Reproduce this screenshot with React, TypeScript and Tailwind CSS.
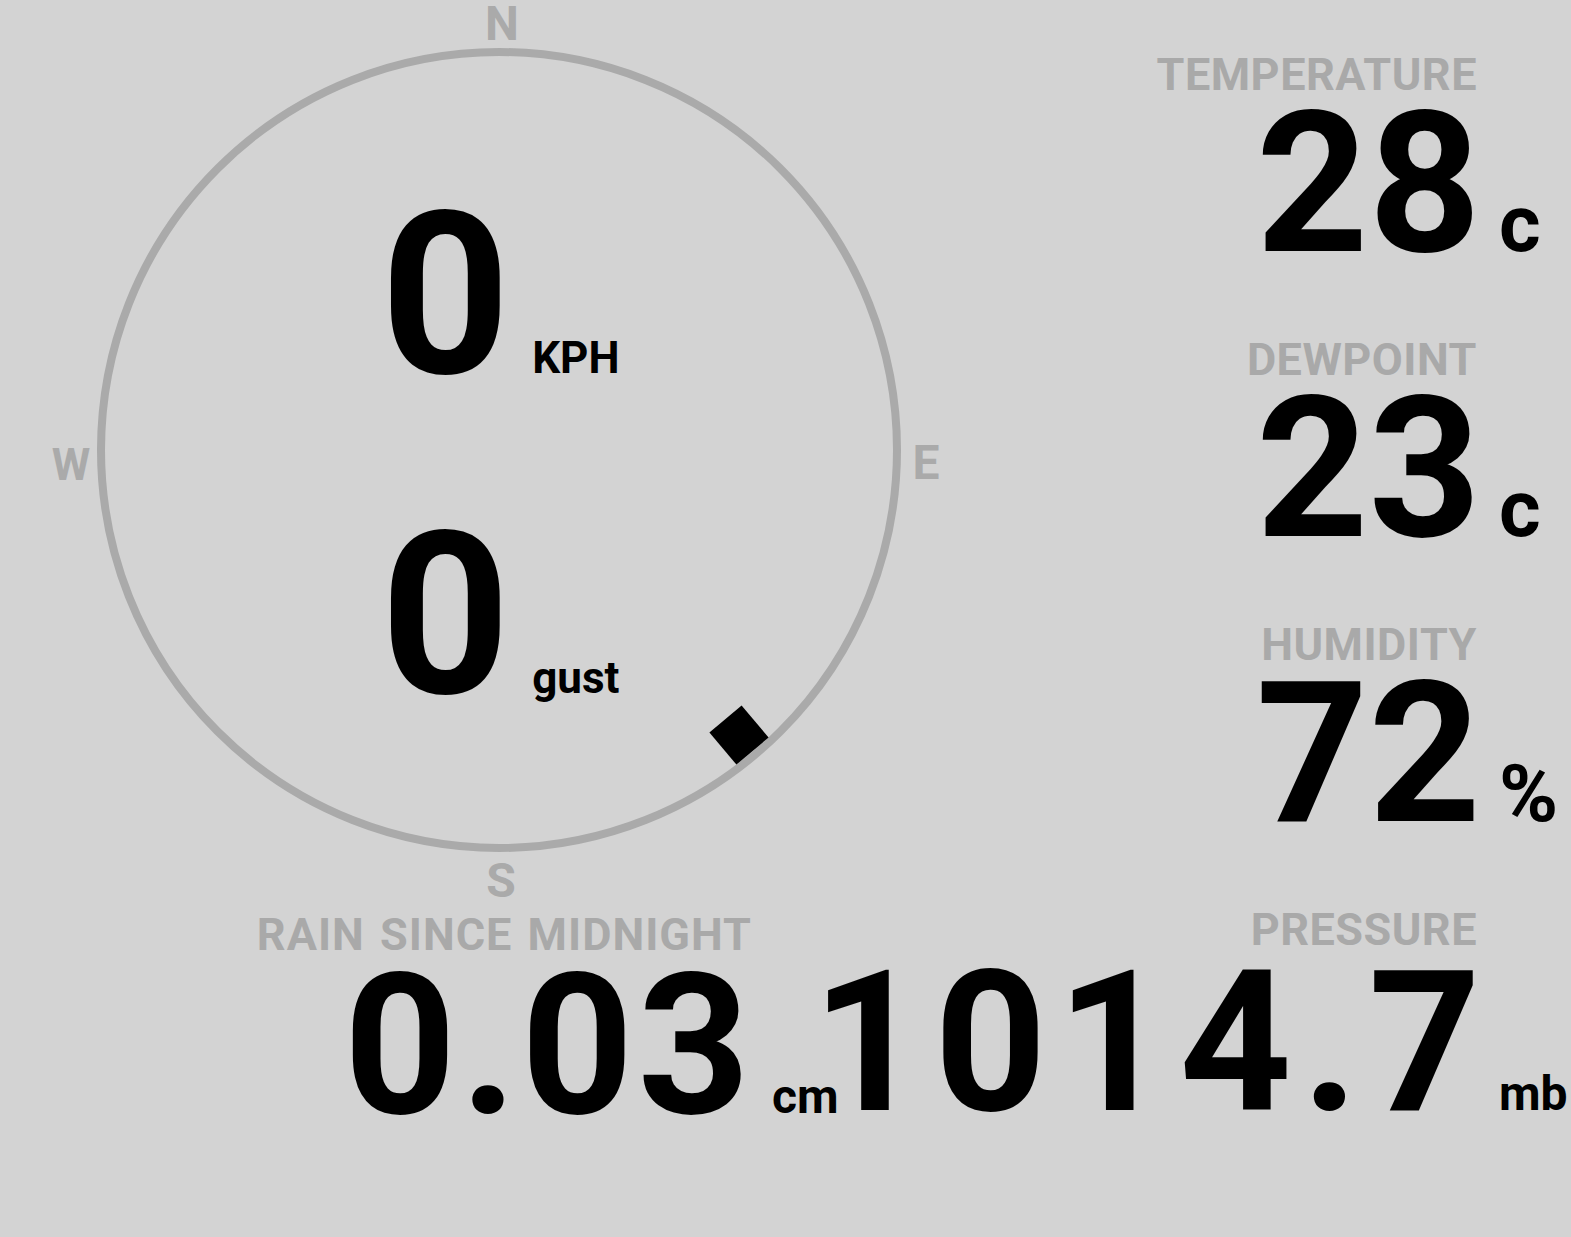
import React from 'react'

type StatProps = {
  label: string
  value: string
  unit: string
  unitClass: string
  labelClass?: string
  valueClass?: string
  numberClass?: string
}

function Stat({
  label,
  value,
  unit,
  unitClass,
  labelClass = 'mr-[94px] tracking-[0.5px]',
  valueClass = 'mt-[12px]',
  numberClass = '',
}: StatProps) {
  return (
    <div className="flex flex-col items-end">
      <div className={`text-[45px] leading-[45px] text-[#a9a9a9] ${labelClass}`}>{label}</div>
      <div className={`flex items-baseline ${valueClass}`}>
        <span className={`text-[196px] leading-[150px] text-black ${numberClass}`}>{value}</span>
        <span className={`leading-[0.75] text-black ${unitClass}`}>{unit}</span>
      </div>
    </div>
  )
}

function Compass() {
  return (
    <svg className="absolute inset-0 overflow-visible" width="1000" height="907" viewBox="0 0 1000 907">
      <circle cx="499" cy="450" r="398" fill="none" stroke="#aaaaaa" strokeWidth="8" />
      <g fill="#aaaaaa" fontFamily="Roboto, sans-serif" fontWeight="700" textAnchor="middle">
        <text x="502" y="40" fontSize="48">N</text>
        <text x="926" y="479" fontSize="48">E</text>
        <text x="501" y="897" fontSize="48">S</text>
        <text x="71" y="480" fontSize="44">W</text>
      </g>
      <rect x="-21" y="-21" width="42" height="42" fill="#000" transform="translate(739 735) rotate(140)" />
    </svg>
  )
}

function Wind({ value, unit }: { value: string; unit: string }) {
  return (
    <div className="flex items-baseline">
      <span className="text-[226px] leading-[222px] text-black">{value}</span>
      <span className="ml-[22px] text-[44px] leading-none text-black">{unit}</span>
    </div>
  )
}

export default function App() {
  return (
    <div className="h-[1237px] w-full overflow-hidden bg-[#d3d3d3] font-['Roboto',sans-serif] font-bold">
      <div className="flex h-[907px]">
        <div className="relative h-full w-[1000px] shrink-0">
          <Compass />
          <div className="relative flex flex-col items-center gap-[98px] pt-[185px]">
            <Wind value="0" unit="KPH" />
            <Wind value="0" unit="gust" />
          </div>
        </div>
        <div className="flex flex-1 flex-col items-end gap-[78px] pt-[52px]">
          <Stat label="TEMPERATURE" value="28" unit="c" unitClass="w-[90px] pl-[18px] text-[80px]" />
          <Stat label="DEWPOINT" value="23" unit="c" unitClass="w-[90px] pl-[18px] text-[80px]" />
          <Stat label="HUMIDITY" value="72" unit="%" unitClass="w-[90px] pl-[18px] text-[80px]" />
        </div>
      </div>
      <div className="flex items-start">
        <div className="flex w-[832px] shrink-0 justify-end pt-[5px]">
          <Stat
            label="RAIN SINCE MIDNIGHT"
            value="0.03"
            unit="cm"
            labelClass="mr-[80px] tracking-[1px] [word-spacing:3px]"
            valueClass="mt-[14px]"
            numberClass="tracking-[4px] -mr-[4px]"
            unitClass="w-[82px] pl-[22px] text-[48px]"
          />
        </div>
        <div className="-ml-[60px] flex flex-1 justify-end">
          <Stat
            label="PRESSURE"
            value="1014.7"
            unit="mb"
            valueClass="mt-[16px]"
            numberClass="tracking-[10px] -mr-[10px]"
            unitClass="w-[90px] pl-[18px] text-[48px]"
          />
        </div>
      </div>
    </div>
  )
}
